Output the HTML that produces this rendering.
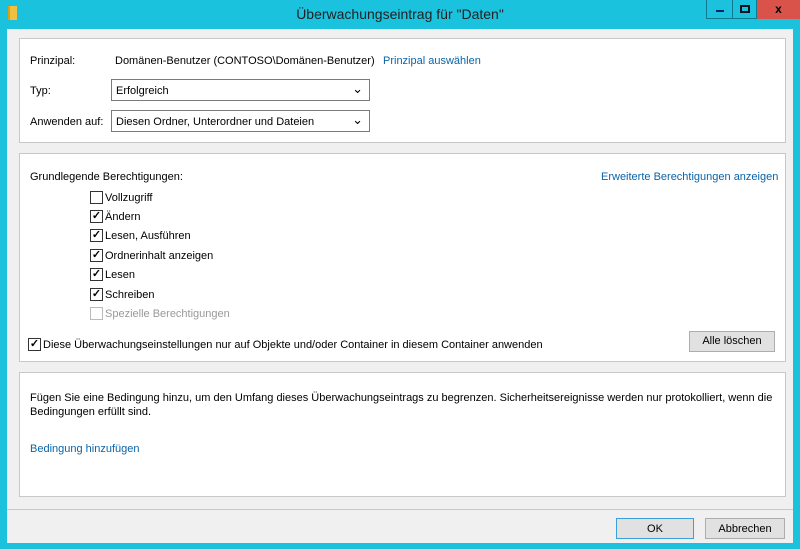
<!DOCTYPE html>
<html><head><meta charset="utf-8"><style>
*{box-sizing:border-box;margin:0;padding:0}
body{width:800px;height:549px;background:#1ac2de;font-family:"Liberation Sans",sans-serif;font-size:11px;color:#000;position:relative;overflow:hidden}
.abs{position:absolute}
.client{left:7px;top:29px;width:786px;height:514px;background:#f0f0f0}
.panel{position:absolute;left:19px;width:767px;background:#fff;border:1px solid #c8c8c8}
.sel{position:absolute;height:22px;border:1px solid #7a7a7a;background:#fff;padding:5px 4px 0}
.sel:after{content:"⌄";position:absolute;right:6px;top:1px;font-size:13px}
.cb{position:absolute;width:13px;height:13px;border:1px solid #333;background:#fff;font-size:11px;line-height:11px;text-align:center;font-weight:bold}
.lbl{position:absolute}
.link{color:#0a64a8;position:absolute}
.btn{position:absolute;height:21px;border:1px solid #adadad;background:#e1e1e1;text-align:center;line-height:19px}
</style></head><body>
<div class="abs" style="left:8px;top:6px;width:9px;height:14px;background:#f0c040;border-left:2px solid #d8a020"></div>
<div class="abs" style="left:0;top:6px;width:800px;text-align:center;font-size:14px;color:#222">Überwachungseintrag für "Daten"</div>
<div class="abs" style="left:706px;top:0;width:27px;height:19px;border:1px solid #127a90;border-top:none"><div class="abs" style="left:9px;top:10px;width:8px;height:2px;background:#126"></div></div>
<div class="abs" style="left:732px;top:0;width:25px;height:19px;border:1px solid #127a90;border-top:none"><div class="abs" style="left:7px;top:5px;width:10px;height:8px;border:2px solid #112"></div></div>
<div class="abs" style="left:757px;top:0;width:43px;height:19px;background:#d9534a;color:#000;text-align:center;font-weight:bold;font-size:12px;line-height:18px">x</div>
<div class="abs client"></div>
<div class="panel" style="top:38px;height:105px"></div>
<div class="lbl" style="left:30px;top:55px">Prinzipal:</div>
<div class="lbl" style="left:115px;top:55px">Domänen-Benutzer (CONTOSO\Domänen-Benutzer)</div>
<div class="link" style="left:383px;top:55px">Prinzipal auswählen</div>
<div class="lbl" style="left:30px;top:85px">Typ:</div>
<div class="sel" style="left:111px;top:79px;width:259px">Erfolgreich</div>
<div class="lbl" style="left:30px;top:116px">Anwenden auf:</div>
<div class="sel" style="left:111px;top:110px;width:259px">Diesen Ordner, Unterordner und Dateien</div>
<div class="panel" style="top:153px;height:209px"></div>
<div class="lbl" style="left:30px;top:171px">Grundlegende Berechtigungen:</div>
<div class="link" style="left:601px;top:171px">Erweiterte Berechtigungen anzeigen</div>
<div class="cb" style="left:90px;top:191px"></div><div class="lbl" style="left:105px;top:192px">Vollzugriff</div>
<div class="cb" style="left:90px;top:210px">✓</div><div class="lbl" style="left:105px;top:211px">Ändern</div>
<div class="cb" style="left:90px;top:229px">✓</div><div class="lbl" style="left:105px;top:230px">Lesen, Ausführen</div>
<div class="cb" style="left:90px;top:249px">✓</div><div class="lbl" style="left:105px;top:250px">Ordnerinhalt anzeigen</div>
<div class="cb" style="left:90px;top:268px">✓</div><div class="lbl" style="left:105px;top:269px">Lesen</div>
<div class="cb" style="left:90px;top:288px">✓</div><div class="lbl" style="left:105px;top:289px">Schreiben</div>
<div class="cb" style="left:90px;top:307px;border-color:#bbb"></div><div class="lbl" style="left:105px;top:308px;color:#999">Spezielle Berechtigungen</div>
<div class="cb" style="left:28px;top:338px">✓</div><div class="lbl" style="left:43px;top:339px">Diese Überwachungseinstellungen nur auf Objekte und/oder Container in diesem Container anwenden</div>
<div class="btn" style="left:689px;top:331px;width:86px">Alle löschen</div>
<div class="panel" style="top:372px;height:125px"></div>
<div class="lbl" style="left:30px;top:391px;width:750px;line-height:14px">Fügen Sie eine Bedingung hinzu, um den Umfang dieses Überwachungseintrags zu begrenzen. Sicherheitsereignisse werden nur protokolliert, wenn die Bedingungen erfüllt sind.</div>
<div class="link" style="left:30px;top:443px">Bedingung hinzufügen</div>
<div class="abs" style="left:7px;top:509px;width:786px;height:1px;background:#c8c8c8"></div>
<div class="btn" style="left:616px;top:518px;width:78px;border-color:#3c9fd8;line-height:20px">OK</div>
<div class="btn" style="left:705px;top:518px;width:80px;line-height:20px">Abbrechen</div>
</body></html>
